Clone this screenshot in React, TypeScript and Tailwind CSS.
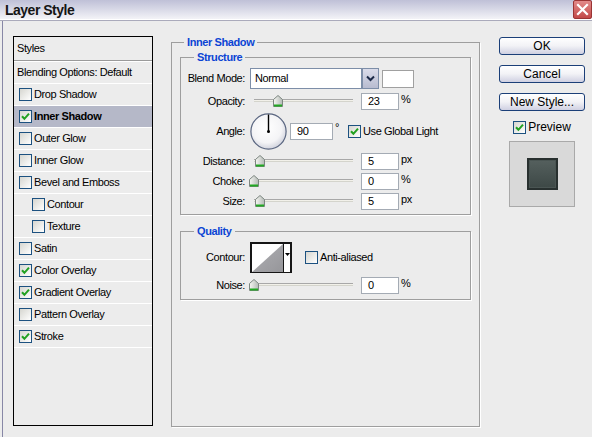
import React from "react";

const F = "font-['Liberation_Sans',Arial,sans-serif]";

function Check({ checked, className = "" }: { checked?: boolean; className?: string }) {
  return (
    <span
      className={`inline-flex w-[13px] h-[13px] shrink-0 items-center justify-center border border-[#1c5180] bg-gradient-to-br from-[#d6d6d0] to-white ${className}`}
    >
      {checked && (
        <svg width="9" height="9" viewBox="0 0 9 9">
          <path d="M1 4.2 L3.4 6.8 L8 1.6" stroke="#21a121" strokeWidth="2" fill="none" />
        </svg>
      )}
    </span>
  );
}

function Thumb() {
  return (
    <svg width="10" height="12" viewBox="0 0 10 12">
      <defs>
        <linearGradient id="thg" x1="0" x2="1" y1="0" y2="0">
          <stop offset="0" stopColor="#f6f6f2" />
          <stop offset="1" stopColor="#b4bab6" />
        </linearGradient>
      </defs>
      <path d="M0.5 4.5 L5 0.5 L9.5 4.5 L9.5 11.5 L0.5 11.5 Z" fill="url(#thg)" stroke="#7c8680" />
      <rect x="1" y="9.5" width="8" height="2" fill="#22a823" />
    </svg>
  );
}

function Slider({ thumbClass }: { thumbClass: string }) {
  return (
    <div className="relative w-[107px] h-[12px] ml-[4px] shrink-0">
      <div className="absolute left-[5px] w-[99px] top-[4px] h-[3px] border-t border-[#a8a8a8] bg-[#f2f1ea] border-b border-b-[#d4d4cc]" />
      <div className={`absolute top-0 ${thumbClass}`}>
        <Thumb />
      </div>
    </div>
  );
}

function Input({ value, className = "" }: { value: string; className?: string }) {
  return (
    <div
      className={`h-[17px] border border-[#a4abb4] bg-white flex items-center pl-[6px] shrink-0 ${className}`}
    >
      {value}
    </div>
  );
}

function SliderRow({
  label,
  value,
  unit,
  thumbClass,
  className = "",
}: {
  label: string;
  value: string;
  unit: string;
  thumbClass: string;
  className?: string;
}) {
  return (
    <div className={`flex items-center h-[18px] ${className}`}>
      <span className="w-[64px] text-right shrink-0">{label}</span>
      <Slider thumbClass={thumbClass} />
      <Input value={value} className="w-[38px] ml-[5px]" />
      <span className="ml-[2px] -mt-[4px]">{unit}</span>
    </div>
  );
}

function Dial() {
  return (
    <svg width="37" height="37" viewBox="0 0 37 37" className="ml-[5px] shrink-0">
      <defs>
        <radialGradient id="dg" cx="0.45" cy="0.4" r="0.6">
          <stop offset="0" stopColor="#ffffff" />
          <stop offset="0.7" stopColor="#f4f4f6" />
          <stop offset="1" stopColor="#d2d4de" />
        </radialGradient>
      </defs>
      <circle cx="18.5" cy="18.5" r="17.6" fill="url(#dg)" stroke="#5a6680" strokeWidth="1.2" />
      <line x1="18.5" y1="18.5" x2="18.5" y2="1.5" stroke="#000" strokeWidth="1.4" />
      <circle cx="18.5" cy="18.5" r="1.5" fill="#000" />
    </svg>
  );
}

function Group({
  title,
  legendClass,
  className = "",
  children,
}: {
  title: string;
  legendClass: string;
  className?: string;
  children: React.ReactNode;
}) {
  return (
    <fieldset
      className={`min-w-0 border border-[#9e9e9e] shadow-[1px_1px_0_#ffffff] ${className}`}
    >
      <legend
        className={`px-[3px] bg-[#ececec] text-[11px] leading-[13px] font-bold text-[#0b44d4] ${legendClass}`}
      >
        {title}
      </legend>
      {children}
    </fieldset>
  );
}

function Btn({ children, className = "" }: { children: React.ReactNode; className?: string }) {
  return (
    <div
      className={`w-[86px] h-[18px] shrink-0 rounded-[3px] border border-[#1b3f78] bg-gradient-to-b from-white via-[#f2f2f6] to-[#cfd0e2] flex items-center justify-center text-[12px] leading-none tracking-normal ${className}`}
    >
      {children}
    </div>
  );
}

const rows: { label: string; checked?: boolean; active?: boolean; indent?: boolean }[] = [
  { label: "Drop Shadow" },
  { label: "Inner Shadow", checked: true, active: true },
  { label: "Outer Glow" },
  { label: "Inner Glow" },
  { label: "Bevel and Emboss" },
  { label: "Contour", indent: true },
  { label: "Texture", indent: true },
  { label: "Satin" },
  { label: "Color Overlay", checked: true },
  { label: "Gradient Overlay", checked: true },
  { label: "Pattern Overlay" },
  { label: "Stroke", checked: true },
];

export default function App() {
  return (
    <div
      className={`w-[592px] h-[437px] bg-[#ececec] text-[11px] leading-[13px] tracking-[-0.4px] text-black overflow-hidden flex flex-col ${F}`}
    >
      {/* Title bar */}
      <div className="h-[19px] shrink-0 flex items-start justify-between bg-gradient-to-b from-[#bfc0d7] to-[#f3f3f7]">
        <div className="pl-[5px] pt-[2px] text-[14px] leading-[16px] font-bold tracking-[-0.5px] text-[#151515]">
          Layer Style
        </div>
        <div className="w-[19px] h-[19px] rounded-[2px] border border-[#9a3434] bg-gradient-to-b from-[#e28a8a] to-[#c24848] flex items-center justify-center">
          <svg width="13" height="13" viewBox="0 0 13 13">
            <path d="M2 2 L11 11 M11 2 L2 11" stroke="#ffffff" strokeWidth="2.2" strokeLinecap="square" />
          </svg>
        </div>
      </div>
      <div className="h-px shrink-0 bg-white" />
      <div className="h-px shrink-0 bg-[#aaaabb]" />

      {/* Body */}
      <div className="flex-1 ml-[2px] border-l border-[#8787a6] flex items-start pl-[10px] pt-[15px]">
        {/* Styles list */}
        <div className="w-[140px] h-[390px] shrink-0 border border-black flex flex-col">
          <div className="h-[23px] flex items-center pl-[3px]">Styles</div>
          <div className="h-px bg-[#9a9a9a]" />
          <div className="h-px bg-white" />
          <div className="h-[22px] border-b border-white flex items-center pl-[3px]">
            Blending Options: Default
          </div>
          {rows.map((r) => (
            <div
              key={r.label}
              className={`h-[22px] border-b border-white flex items-center ${
                r.indent ? "pl-[18px]" : "pl-[5px]"
              } ${r.active ? "bg-[#b5b8c8] font-bold" : ""}`}
            >
              <Check checked={r.checked} />
              <span className="ml-[2px]">{r.label}</span>
            </div>
          ))}
        </div>

        {/* Inner Shadow group */}
        <Group title="Inner Shadow" legendClass="ml-[12px]" className="ml-[18px] w-[309px] h-[391px] shrink-0">
          <div className="px-[8px]">
            <Group title="Structure" legendClass="ml-[13px]" className="mt-[2px]">
              <div className="pb-[4px]">
                {/* Blend mode */}
                <div className="flex items-center h-[21px] mt-[4px]">
                  <span className="w-[64px] text-right shrink-0">Blend Mode:</span>
                  <div className="ml-[5px] flex h-[21px]">
                    <div className="w-[112px] border border-[#7d8ea8] bg-white flex items-center pl-[4px]">
                      Normal
                    </div>
                    <div className="w-[17px] border border-[#7d8ea8] bg-gradient-to-b from-[#dadcea] to-[#b8bcd0] flex items-center justify-center">
                      <svg width="9" height="7" viewBox="0 0 9 7">
                        <path d="M1 1.5 L4.5 5 L8 1.5" stroke="#1c2a48" strokeWidth="2" fill="none" />
                      </svg>
                    </div>
                  </div>
                  <div className="ml-[3px] w-[32px] h-[18px] border border-[#a0a0a0] bg-white" />
                </div>

                <SliderRow label="Opacity:" value="23" unit="%" thumbClass="left-[24px]" className="mt-[3px]" />

                {/* Angle */}
                <div className="flex items-center h-[37px] mt-[3px]">
                  <span className="w-[64px] text-right shrink-0">Angle:</span>
                  <Dial />
                  <Input value="90" className="w-[43px] ml-[3px]" />
                  <span className="ml-[2px] -mt-[8px]">°</span>
                  <Check checked className="ml-[9px]" />
                  <span className="ml-[2px]">Use Global Light</span>
                </div>

                <SliderRow label="Distance:" value="5" unit="px" thumbClass="left-[6px]" className="mt-[2px]" />
                <SliderRow label="Choke:" value="0" unit="%" thumbClass="left-0" className="mt-[2px]" />
                <SliderRow label="Size:" value="5" unit="px" thumbClass="left-[6px]" className="mt-[2px]" />
              </div>
            </Group>

            <Group title="Quality" legendClass="ml-[13px]" className="mt-[10px]">
              <div className="pb-[5px]">
                <div className="flex items-center mt-[4px]">
                  <span className="w-[64px] text-right shrink-0">Contour:</span>
                  <div className="ml-[5px] w-[42px] h-[31px] shrink-0 border-l-2 border-t-2 border-r-2 border-b border-[#161616] flex bg-white">
                    <svg width="31" height="28" viewBox="0 0 31 28" className="shrink-0">
                      <defs>
                        <linearGradient id="cg" x1="0" x2="1" y1="0" y2="1">
                          <stop offset="0" stopColor="#b0b0b4" />
                          <stop offset="1" stopColor="#96969a" />
                        </linearGradient>
                      </defs>
                      <polygon points="0,28 31,0 31,28" fill="url(#cg)" />
                    </svg>
                    <div className="flex-1 border-l border-[#161616] flex justify-center pt-[9px]">
                      <svg width="5" height="3" viewBox="0 0 5 3">
                        <polygon points="0,0 5,0 2.5,3" fill="#000" />
                      </svg>
                    </div>
                  </div>
                  <Check className="ml-[13px]" />
                  <span className="ml-[2px]">Anti-aliased</span>
                </div>
                <SliderRow label="Noise:" value="0" unit="%" thumbClass="left-0" className="mt-[3px]" />
              </div>
            </Group>
          </div>
        </Group>

        {/* Right column */}
        <div className="ml-[19px] mt-[1px] w-[86px] shrink-0 flex flex-col items-center">
          <Btn>OK</Btn>
          <Btn className="mt-[10px]">Cancel</Btn>
          <Btn className="mt-[10px]">New Style...</Btn>
          <div className="mt-[10px] flex items-center">
            <Check checked />
            <span className="ml-[2px] text-[12px] tracking-normal">Preview</span>
          </div>
          <div className="mt-[7px] w-[66px] h-[66px] border border-[#a9a9a9] bg-[#d9d9d9] flex items-center justify-center">
            <div className="w-[31px] h-[32px] border-2 border-[#28302f] bg-gradient-to-b from-[#55605e] to-[#3d4846] shadow-[inset_0_0_0_1px_#4a5553]" />
          </div>
        </div>
      </div>
    </div>
  );
}
